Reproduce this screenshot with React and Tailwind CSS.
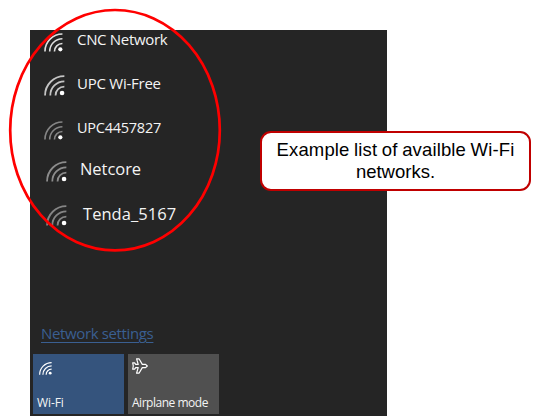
import React from 'react';

const networks = [
  { name: 'CNC Network', row: 'h-[42px] pl-[14px] pt-[3px]', icon: 'w-[19px] h-[19px]', label: 'ml-[14px] -mt-[5px] text-[15px] tracking-[-0.32px]', stroke: '#dedede' },
  { name: 'UPC Wi-Free', row: 'h-[49px] pl-[14px] pt-[3px]', icon: 'w-[21px] h-[21px]', label: 'ml-[12px] -mt-[3px] text-[15px] tracking-[-0.25px]', stroke: '#c4c4c4' },
  { name: 'UPC4457827', row: 'h-[40px] pl-[14px]', icon: 'w-[19px] h-[19px]', label: 'ml-[14px] -mt-[4px] text-[14.5px] tracking-[-0.25px]', stroke: '#858585' },
  { name: 'Netcore', row: 'h-[44px] pl-[16px]', icon: 'w-[21px] h-[21px]', label: 'ml-[13px] -mt-[3px] text-[16.5px] tracking-[-0.05px]', stroke: '#8c8c8c' },
  { name: 'Tenda_5167', row: 'h-[44px] pl-[16px]', icon: 'w-[21px] h-[21px]', label: 'ml-[16px] -mt-[2px] text-[16.5px] tracking-[0.05px]', stroke: '#858585' },
];

function WifiIcon({ className, stroke, width = 1.7 }) {
  return (
    <svg className={`shrink-0 ${className}`} viewBox="0 0 20 20" fill="none">
      <g stroke={stroke} strokeWidth={width}>
        <path d="M1 19.5A18.4 18.4 0 0 1 19.4 1" />
        <path d="M6 19.5A13.4 13.4 0 0 1 19.4 6" />
        <path d="M11 19.5A8.4 8.4 0 0 1 19.4 11" />
      </g>
      <circle cx="17.2" cy="17.2" r="2.2" fill="#fff" />
    </svg>
  );
}

function AirplaneIcon() {
  return (
    <svg className="h-4 w-4" viewBox="0 0 16 16" fill="none" stroke="#fff" strokeWidth="1.2" strokeLinejoin="round">
      <path d="M4.6.8H7L10.3 6.4H13.6L15.3 8L13.6 9.6H10.3L7 15.2H4.6L6.2 9.6H3.7L2.6 11.2H.7L1.3 8L.7 4.8H2.6L3.7 6.4H6.2Z" />
    </svg>
  );
}

export default function App() {
  return (
    <div className="relative h-[416px] w-[540px] overflow-hidden bg-white pl-[30px] pt-[30px]">
      <main className="flex h-[386px] w-[357px] flex-col bg-[#252525] font-['Open_Sans','Noto_Sans',sans-serif] text-[#f4f4f4]">
        <div className="h-[291px]">
          {networks.map((n) => (
            <div key={n.name} className={`flex items-start ${n.row}`}>
              <WifiIcon className={n.icon} stroke={n.stroke} />
              <span className={`whitespace-nowrap leading-[22px] ${n.label}`}>{n.name}</span>
            </div>
          ))}
        </div>
        <div className="h-[33px] pl-[11px]">
          <a className="text-[15px] leading-[20px] tracking-[-0.36px] text-[#3a5f91] underline underline-offset-[3px]">Network settings</a>
        </div>
        <div className="flex gap-1 pl-[3px] text-[12px]">
          <div className="flex h-[60px] w-[91px] flex-col justify-between bg-[#35547d] pl-[4px] pt-[8px]">
            <WifiIcon className="ml-[2px] h-[13px] w-[13px]" stroke="#fff" width={1.8} />
            <span className="mb-[3px] leading-4 tracking-[-0.1px]">Wi-Fi</span>
          </div>
          <div className="flex h-[60px] w-[91px] flex-col justify-between bg-[#505050] pl-[4px] pt-[4px]">
            <AirplaneIcon />
            <span className="mb-[3px] whitespace-nowrap leading-4 tracking-[-0.48px]">Airplane mode</span>
          </div>
        </div>
      </main>
      <svg className="absolute left-0 top-0 h-[260px] w-[230px]" viewBox="0 0 230 260" fill="none">
        <ellipse cx="115" cy="130.2" rx="104.8" ry="120.2" stroke="#ff0000" strokeWidth="2.7" />
      </svg>
      <div className="absolute left-[260px] top-[131px] h-[60px] w-[271px] rounded-[11px] border-2 border-[#c00000] bg-white pt-[6px] text-center font-['Liberation_Sans',Arial,sans-serif] text-[18.5px] leading-[22px] text-black">
        <div className="whitespace-nowrap tracking-[0.14px] [word-spacing:-0.7px]">Example list of availble Wi-Fi</div>
        <div>networks.</div>
      </div>
    </div>
  );
}
